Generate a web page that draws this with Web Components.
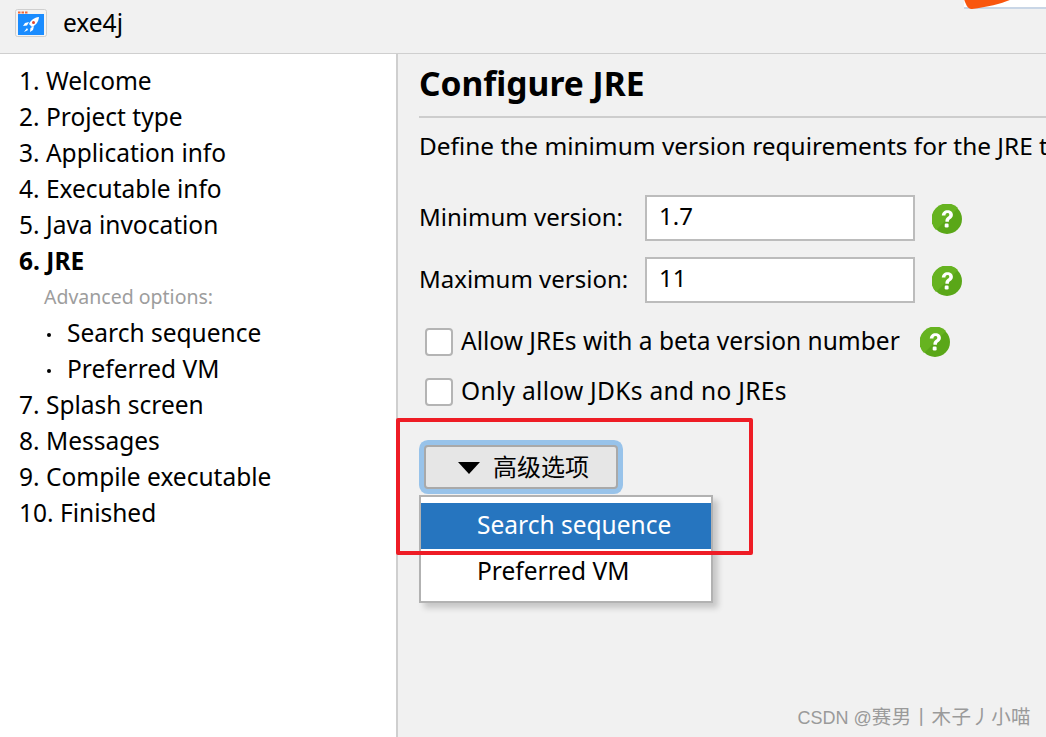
<!DOCTYPE html>
<html>
<head>
<meta charset="utf-8">
<title>exe4j</title>
<style>
  html, body { margin: 0; height: 100%; }
  body { font-family: "Noto Sans", "Noto Sans CJK SC", sans-serif; color: #000; background: #f1f1f1; overflow: hidden; }
</style>
</head>
<body>
<app-window>
  <wizard-steps slot="side"></wizard-steps>
  <jre-page slot="main"></jre-page>
</app-window>

<script>
// Title bar + two panes
class AppWindow extends HTMLElement {
  constructor() {
    super()
    this.attachShadow({ mode: 'open' })
    this.shadowRoot.innerHTML = `
      <style>
        :host { display: block; position: relative; width: 1046px; height: 737px; overflow: hidden; background: #f1f1f1; }
        header { display: flex; align-items: center; gap: 16px; padding: 0 0 6px 15px; box-sizing: border-box; border-bottom: 1px solid #cfcfcf; height: 54px; font-size: 24.5px; }
        header svg { display: block; }
        header span { margin-top: -2px; }
        .panes { display: flex; height: 683px; }
        .side { width: 396px; background: #fff; border-right: 2px solid #cfcfcf; flex: none; }
        .main { flex: 1; min-width: 0; }
        .corner { position: absolute; top: 0; right: 0; width: 82px; height: 7px; background: #fff; border-bottom: 2px solid #c9d6e6; }
        .blob { position: absolute; top: -1px; left: 962px; }
        .mark { position: absolute; right: 15px; top: 701px; font-size: 18px; color: #9a9a9a; white-space: nowrap; font-family: "Liberation Sans", "Noto Sans CJK SC", sans-serif; }
        .mark b { font-weight: 400; font-size: 19.5px; letter-spacing: .4px; font-family: "Noto Sans CJK SC", sans-serif; }
      </style>
      <header>
        <svg width="32" height="29" viewBox="0 0 32 29">
          <rect x="0.5" y="0.5" width="31" height="27" rx="2" fill="#f4f4f4" stroke="#cfcfcf"/>
          <rect x="3" y="2.500" width="2.500" height="2" fill="#f2693c"/><rect x="6.500" y="2.500" width="2.500" height="2" fill="#f2693c"/><rect x="10" y="2.500" width="2.500" height="2" fill="#f2693c"/>
          <rect x="3" y="5" width="26" height="21" fill="#1a8cff"/>
          <path d="M24 8c-5 .5-8 3-10 7l3 3c4-2 6.500-5 7-10z" fill="#fff"/>
          <path d="M14 13l-4 1-2 3 4-.5zM19 17l-1 4-3 2 .5-4zM12 19l-3 4 4-2z" fill="#fff"/>
          <circle cx="18.500" cy="13.500" r="1.500" fill="#e2452e"/>
        </svg>
        <span>exe4j</span>
      </header>
      <div class="panes">
        <div class="side"><slot name="side"></slot></div>
        <div class="main"><slot name="main"></slot></div>
      </div>
      <div class="corner"></div>
      <svg class="blob" width="50" height="11" viewBox="0 0 50 11"><path d="M2 0h48c-8 4-24 8-40 10-4 .5-6-4-8-10z" fill="#f9560e"/></svg>
      <div class="mark">CSDN @<b>赛男丨木子丿小喵</b></div>
    `
  }
}

class WizardSteps extends HTMLElement {
  constructor() {
    super()
    this.attachShadow({ mode: 'open' })
    const steps = [
      ['1. Welcome'], ['2. Project type'], ['3. Application info'], ['4. Executable info'], ['5. Java invocation'],
      ['6. JRE', 'on'], ['Advanced options:', 'sub'], ['Search sequence', 'dot'], ['Preferred VM', 'dot'],
      ['7. Splash screen'], ['8. Messages'], ['9. Compile executable'], ['10. Finished']
    ]
    const rows = steps.map(([text, kind]) => `<div class="row ${kind || ''}">${text}</div>`).join('')
    this.shadowRoot.innerHTML = `
      <style>
        :host { display: block; padding: 9px 0 0 19px; font-size: 24.5px; }
        .row { height: 36px; line-height: 36px; white-space: nowrap; }
        .on { font-weight: 700; }
        .sub { color: #9d9d9d; font-size: 19.5px; padding-left: 25px; }
        .dot { padding-left: 48px; position: relative; }
        .dot::before { content: ""; position: absolute; left: 28px; top: 18px; width: 4px; height: 4px; border-radius: 50%; background: #000; }
      </style>
      ${rows}
    `
  }
}

class HelpIcon extends HTMLElement {
  constructor() {
    super()
    this.attachShadow({ mode: 'open' })
    this.shadowRoot.innerHTML = `
      <style>:host { display: block; width: 30px; height: 30px; flex: none; } svg { display: block; }</style>
      <svg width="30" height="30" viewBox="0 0 30 30">
        <circle cx="15" cy="15" r="15" fill="#5aa718"/>
        <path d="M4 26A15 15 0 0 1 26 4z" fill="#66b320"/>
        <path d="M9.800 11.500c.3-3.300 2.600-5.300 5.700-5.300 3.200 0 5.400 1.900 5.400 4.600 0 2.100-1.100 3.200-2.500 4.200-1.200.9-1.500 1.400-1.500 2.700h-3.500c-.1-2.300.5-3.500 2.100-4.700 1.100-.8 1.800-1.300 1.800-2.300 0-1-.7-1.600-1.800-1.600-1.200 0-1.900.8-2.100 2.400z" fill="#fff"/>
        <rect x="12.700" y="19.500" width="3.900" height="3.900" rx="1.200" fill="#fff"/>
      </svg>
    `
  }
}

class VersionField extends HTMLElement {
  constructor() {
    super()
    this.attachShadow({ mode: 'open' })
    this.shadowRoot.innerHTML = `
      <style>
        :host { display: flex; align-items: center; height: 46px; }
        label { width: 226px; margin-left: -1px; flex: none; white-space: nowrap; padding-bottom: 4px; }
        .box { width: 270px; height: 46px; box-sizing: border-box; border: 2px solid #bcbcbc; background: #fff; padding-left: 12px; line-height: 38px; flex: none; margin-right: 17px; }
        help-icon { margin-top: 2px; }
      </style>
      <label>${this.getAttribute('label')}</label>
      <div class="box">${this.getAttribute('value')}</div>
      <help-icon></help-icon>
    `
  }
}

class CheckRow extends HTMLElement {
  constructor() {
    super()
    this.attachShadow({ mode: 'open' })
    this.shadowRoot.innerHTML = `
      <style>
        :host { display: flex; align-items: center; height: 30px; padding-left: 5px; gap: 8px; font-size: 24.5px; }
        i { width: 28px; height: 28px; box-sizing: border-box; border: 2px solid #b4b4b4; border-radius: 4px; background: #fff; flex: none; }
        span { white-space: nowrap; padding-bottom: 3px; }
        ::slotted(help-icon) { margin-left: 10px; }
      </style>
      <i></i><span>${this.getAttribute('label')}</span><slot></slot>
    `
  }
}

class DropButton extends HTMLElement {
  constructor() {
    super()
    this.attachShadow({ mode: 'open' })
    this.shadowRoot.innerHTML = `
      <style>
        :host { display: block; width: 194px; height: 44px; box-sizing: border-box; border: 2px solid #a9a9a9; border-radius: 4px; background: #e6e6e6; box-shadow: 0 0 0 5px #98c3ea; }
        .in { display: flex; align-items: center; height: 100%; padding-left: 32px; gap: 13px; font-family: "Noto Sans CJK SC", sans-serif; font-size: 24px; }
        svg { display: block; margin-top: 2px; }
        span { padding-bottom: 4px; }
      </style>
      <div class="in">
        <svg width="22" height="12" viewBox="0 0 22 12"><path d="M0 0h22L11 12z" fill="#000"/></svg>
        <span><slot></slot></span>
      </div>
    `
  }
}

class PopupMenu extends HTMLElement {
  constructor() {
    super()
    this.attachShadow({ mode: 'open' })
    this.shadowRoot.innerHTML = `
      <style>
        :host { display: block; position: absolute; left: 419px; top: 495px; width: 294px; height: 108px; box-sizing: border-box; border: 2px solid #b2b2b2; background: #fff; padding-top: 6px; box-shadow: 5px 5px 6px rgba(0,0,0,.18); font-size: 24.5px; }
        .item { height: 46px; line-height: 44px; padding-left: 56px; white-space: nowrap; }
        .sel { background: #2675bf; color: #fff; }
      </style>
      <div class="item sel">Search sequence</div>
      <div class="item">Preferred VM</div>
    `
  }
}

class JrePage extends HTMLElement {
  constructor() {
    super()
    this.attachShadow({ mode: 'open' })
    this.shadowRoot.innerHTML = `
      <style>
        :host { display: block; padding: 0 0 0 22px; font-size: 24px; }
        h1 { margin: 0 0 0 -1px; padding-top: 7px; font-size: 33.6px; line-height: 44px; font-weight: 700; white-space: nowrap; }
        hr { margin: 11px 0 0 -1px; border: 0; border-top: 2px solid #cdcdcd; }
        p { margin: 0 0 0 -1px; padding-top: 10px; line-height: 36px; white-space: nowrap; font-size: 24.4px; overflow: hidden; }
        .form { display: flex; flex-direction: column; padding-top: 31px; }
        version-field + version-field { margin-top: 16px; }
        .checks { display: flex; flex-direction: column; gap: 20px; padding-top: 24px; }
        .btn { padding: 38px 0 0 4px; }
        .frame { position: absolute; left: 396px; top: 418px; width: 357px; height: 137px; box-sizing: border-box; border: 4px solid #ee1c25; border-radius: 2px; z-index: 2; }
        .wide { letter-spacing: .3px; }
        help-icon { margin-left: 12px; }
      </style>
      <h1>Configure JRE</h1>
      <hr>
      <p>Define the minimum version requirements for the JRE the executable will use.</p>
      <div class="form">
        <version-field label="Minimum version:" value="1.7"></version-field>
        <version-field label="Maximum version:" value="11"></version-field>
      </div>
      <div class="checks">
        <check-row label="Allow JREs with a beta version number"><help-icon></help-icon></check-row>
        <check-row class="wide" label="Only allow JDKs and no JREs"></check-row>
      </div>
      <div class="btn"><drop-button>高级选项</drop-button></div>
      <popup-menu></popup-menu>
      <div class="frame"></div>
    `
  }
}

customElements.define('help-icon', HelpIcon)
customElements.define('version-field', VersionField)
customElements.define('check-row', CheckRow)
customElements.define('drop-button', DropButton)
customElements.define('popup-menu', PopupMenu)
customElements.define('wizard-steps', WizardSteps)
customElements.define('jre-page', JrePage)
customElements.define('app-window', AppWindow)
</script>
</body>
</html>
